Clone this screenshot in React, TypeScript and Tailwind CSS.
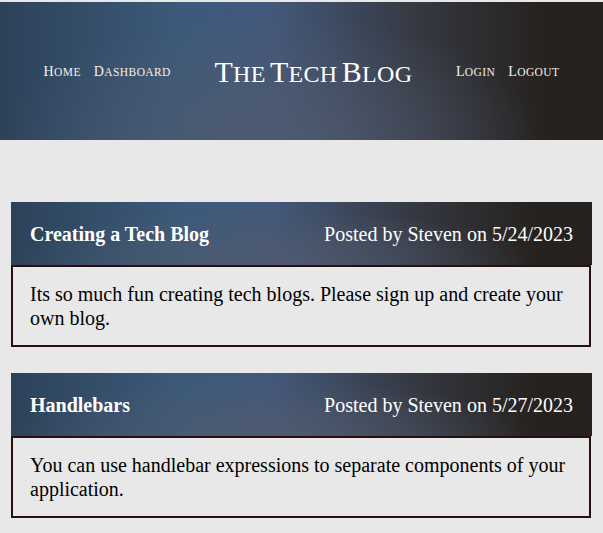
const posts = [
  {
    title: "Creating a Tech Blog",
    author: "Steven",
    date: "5/24/2023",
    body: "Its so much fun creating tech blogs. Please sign up and create your own blog.",
  },
  {
    title: "Handlebars",
    author: "Steven",
    date: "5/27/2023",
    body: "You can use handlebar expressions to separate components of your application.",
  },
];

const gradient =
  "bg-[radial-gradient(ellipse_45%_90%_at_45%_100%,rgba(80,90,110,0.9),rgba(70,85,110,0)_100%),linear-gradient(to_right,#2d4259_0%,#3c5a7a_30%,#43587a_45%,#363a44_68%,#26221f_90%,#25211e_100%)]";

// Cinzel-like caps: a tall first letter and the rest as smaller capitals
function Caps({ text, big, small }: { text: string; big: string; small: string }) {
  return (
    <>
      {text.split(" ").map((word, i) => (
        <span key={i}>
          {i > 0 && " "}
          <span className={big}>{word[0]}</span>
          <span className={`${small} uppercase`}>{word.slice(1)}</span>
        </span>
      ))}
    </>
  );
}

export default function App() {
  return (
    <div className="min-h-[533px] bg-[#e8e8e8] pt-[2px] font-['Liberation_Serif',serif]">
      {/* Header */}
      <header
        className={`flex h-[138px] items-center justify-evenly text-white ${gradient}`}>
        <nav className="flex items-baseline gap-[13px] tracking-[0.4px] text-[#f4f1ec]">
          <a><Caps text="Home" big="text-[14px]" small="text-[11.5px]" /></a>
          <a><Caps text="Dashboard" big="text-[14px]" small="text-[11.5px]" /></a>
        </nav>
        <h1 className="tracking-[0.3px]">
          <Caps text="The Tech Blog" big="text-[30px]" small="text-[24px]" />
        </h1>
        <nav className="flex items-baseline gap-[13px] tracking-[0.4px] text-[#f4f1ec]">
          <a><Caps text="Login" big="text-[14px]" small="text-[11.5px]" /></a>
          <a><Caps text="Logout" big="text-[14px]" small="text-[11.5px]" /></a>
        </nav>
      </header>

      <main className="flex flex-col gap-[26px] px-[11px] pt-[62px]">
        {posts.map((post) => (
          <article key={post.title}>
            {/* Post header */}
            <div
              className={`flex h-[63px] items-center justify-between px-[19px] text-[20px] text-white ${gradient}`}>
              <h2 className="font-bold">{post.title}</h2>
              <span>
                Posted by {post.author} on {post.date}
              </span>
            </div>
            {/* Post body */}
            <div className="mr-[1px] border-2 border-[#2a0f10] px-[17px] pb-[15px] pt-[15px] text-[20px] leading-[24px] text-black">
              {post.body}
            </div>
          </article>
        ))}
      </main>
    </div>
  );
}
